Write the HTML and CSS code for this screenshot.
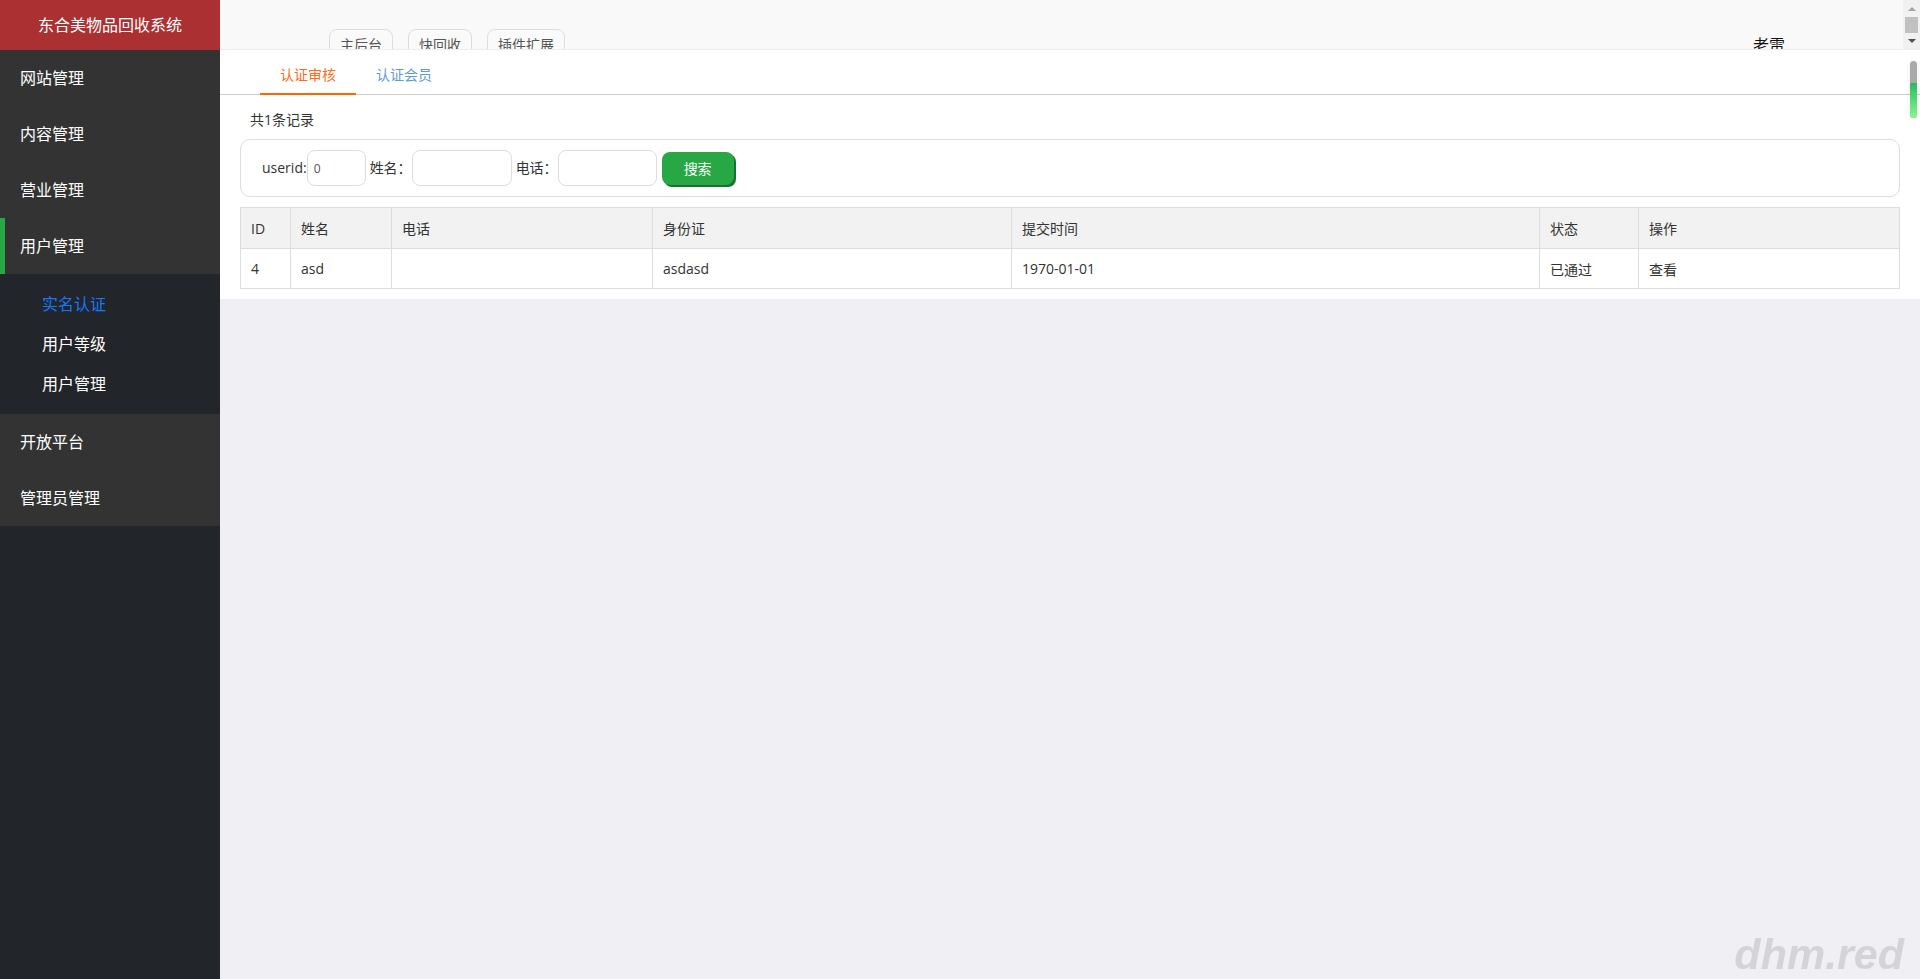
FILE: index.html
```html
<!DOCTYPE html>
<html lang="zh-CN">
  <head>
    <meta charset="UTF-8" />
    <meta name="viewport" content="width=device-width, initial-scale=1.0" />
    <title>东合美物品回收系统</title>
    <link rel="stylesheet" href="styles.css">
  </head>
  <body>
    <div class="layout">
      <aside class="sidebar">
        <div class="brand">东合美物品回收系统</div>
        <ul class="menu">
          <li class="menu-item"><a href="#" class="menu-link">网站管理</a></li>
          <li class="menu-item"><a href="#" class="menu-link">内容管理</a></li>
          <li class="menu-item"><a href="#" class="menu-link">营业管理</a></li>
          <li class="menu-item open">
            <a href="#" class="menu-link">用户管理</a>
            <ul class="submenu">
              <li class="active"><a href="#">实名认证</a></li>
              <li><a href="#">用户等级</a></li>
              <li><a href="#">用户管理</a></li>
            </ul>
          </li>
          <li class="menu-item"><a href="#" class="menu-link">开放平台</a></li>
          <li class="menu-item"><a href="#" class="menu-link">管理员管理</a></li>
        </ul>
      </aside>

      <div class="main">
        <header class="topbar">
          <nav class="nav">
            <a href="#" class="nav-btn">主后台</a>
            <a href="#" class="nav-btn">快回收</a>
            <a href="#" class="nav-btn">插件扩展</a>
          </nav>
          <div class="user">老雷</div>
          <div class="frame-scroll">
            <span class="arrow-up"></span>
            <span class="thumb"></span>
            <span class="arrow-down"></span>
          </div>
        </header>

        <section class="content">
          <div class="tabs">
            <a href="#" class="tab active">认证审核</a>
            <a href="#" class="tab">认证会员</a>
          </div>

          <div class="count">共1条记录</div>

          <form class="search" onsubmit="return false">
            <label>userid:</label>
            <input type="text" class="input-id" value="0" />
            <label>姓名：</label>
            <input type="text" class="input-name" />
            <label>电话：</label>
            <input type="text" class="input-phone" />
            <button class="btn-search">搜索</button>
          </form>

          <table class="list">
            <colgroup>
              <col class="c-id" />
              <col class="c-name" />
              <col class="c-phone" />
              <col class="c-card" />
              <col class="c-time" />
              <col class="c-status" />
              <col />
            </colgroup>
            <thead>
              <tr>
                <th>ID</th>
                <th>姓名</th>
                <th>电话</th>
                <th>身份证</th>
                <th>提交时间</th>
                <th>状态</th>
                <th>操作</th>
              </tr>
            </thead>
            <tbody>
              <tr>
                <td>4</td>
                <td>asd</td>
                <td></td>
                <td>asdasd</td>
                <td>1970-01-01</td>
                <td>已通过</td>
                <td><a href="#" class="view">查看</a></td>
              </tr>
            </tbody>
          </table>

          <div class="scroll-meter"><span></span></div>
        </section>
      </div>
    </div>

    <div class="watermark">dhm.red</div>
  </body>
</html>
```

FILE: styles.css
```css
* {
  box-sizing: border-box;
}
html,
body {
  margin: 0;
  height: 100%;
}
body {
  font-family: "Open Sans", "Noto Sans CJK SC", sans-serif;
  font-size: 14px;
  color: #333;
  background: #efeff4;
  overflow: hidden;
}
a {
  text-decoration: none;
}
.layout {
  display: flex;
  height: 100vh;
}

/* sidebar */
.sidebar {
  width: 220px;
  flex-shrink: 0;
  background: #222529;
}
.brand {
  height: 50px;
  line-height: 50px;
  text-align: center;
  background: #aa3032;
  color: #fff;
  font-size: 16px;
}
.menu,
.submenu {
  list-style: none;
  margin: 0;
  padding: 0;
}
.menu-link {
  display: block;
  height: 56px;
  line-height: 56px;
  padding-left: 20px;
  background: #333;
  color: #fff;
  font-size: 16px;
}
.menu-item.open > .menu-link {
  box-shadow: inset 5px 0 0 #28a745;
}
.submenu {
  background: #222529;
  padding: 10px 0;
}
.submenu a {
  display: block;
  height: 40px;
  line-height: 40px;
  padding-left: 42px;
  color: #fff;
  font-size: 16px;
}
.submenu .active a {
  color: #1677ff;
}

/* main */
.main {
  flex: 1;
  min-width: 0;
  display: flex;
  flex-direction: column;
}
.topbar {
  position: relative;
  height: 50px;
  flex-shrink: 0;
  overflow: hidden;
  display: flex;
  align-items: flex-start;
  padding: 29px 0 0 109px;
  background: #f9f9f9;
  border-bottom: 1px solid #eee;
}
.nav {
  display: flex;
  gap: 15px;
}
.nav-btn {
  height: 32px;
  line-height: 30px;
  padding: 0 10px;
  border: 1px solid #ddd;
  border-radius: 8px;
  background: #fafafa;
  color: #555;
  font-size: 14px;
}
.user {
  margin-left: auto;
  margin-right: 135px;
  margin-top: 6px;
  line-height: 20px;
  font-size: 16px;
  color: #111;
}
.frame-scroll {
  position: absolute;
  top: 0;
  right: 0;
  width: 17px;
  height: 50px;
  background: #f1f1f1;
}
.frame-scroll .arrow-up,
.frame-scroll .arrow-down {
  position: absolute;
  left: 5px;
  width: 0;
  height: 0;
  border-left: 4px solid transparent;
  border-right: 4px solid transparent;
}
.frame-scroll .arrow-up {
  top: 7px;
  border-bottom: 4px solid #a3a3a3;
}
.frame-scroll .arrow-down {
  top: 39px;
  border-top: 4px solid #505050;
}
.frame-scroll .thumb {
  position: absolute;
  top: 17px;
  left: 2px;
  width: 13px;
  height: 16px;
  background: #c1c1c1;
}

/* content */
.content {
  position: relative;
  background: #fff;
  padding: 0 20px 10px;
}
.tabs {
  display: flex;
  margin: 0 -20px;
  padding-left: 40px;
  border-bottom: 1px solid #ccc;
}
.tab {
  padding: 6px 20px 0;
  line-height: 38px;
  color: #5b9bd5;
}
.tab.active {
  line-height: 37px;
  color: #ff6a1a;
  border-bottom: 2px solid #f60;
  margin-bottom: -1px;
}
.count {
  margin-top: 15px;
  padding-left: 10px;
  line-height: 20px;
}
.search {
  display: flex;
  align-items: center;
  margin: 9px 0 0;
  padding: 10px 21px;
  border: 1px solid #ddd;
  border-radius: 10px;
}
.search label {
  margin-left: 4px;
  line-height: 20px;
}
.search label:first-child {
  margin-left: 0;
}
.search input {
  height: 36px;
  padding: 0 6px;
  border: 1px solid #ddd;
  border-radius: 8px;
  font-family: inherit;
  font-size: 12px;
  color: #555;
  outline: none;
}
.input-id {
  width: 59px;
}
.input-name {
  width: 100px;
}
.input-phone {
  width: 99px;
}
.btn-search {
  margin-left: 5px;
  width: 72px;
  height: 33px;
  border: none;
  border-radius: 8px;
  background: #28a745;
  color: #fff;
  font-family: inherit;
  font-size: 14px;
  box-shadow: 2px 2px 0 #1b6e31;
  cursor: pointer;
}
.list {
  width: 100%;
  margin-top: 10px;
  border-collapse: collapse;
  table-layout: fixed;
}
.list th,
.list td {
  padding: 0 10px;
  border: 1px solid #ddd;
  text-align: left;
  font-weight: normal;
  color: #333;
}
.list th {
  height: 41px;
  background: #f2f2f2;
}
.list td {
  height: 40px;
}
.c-id {
  width: 50px;
}
.c-name {
  width: 101px;
}
.c-phone {
  width: 261px;
}
.c-card {
  width: 359px;
}
.c-time {
  width: 528px;
}
.c-status {
  width: 99px;
}
.view {
  color: #333;
}
.scroll-meter {
  position: absolute;
  top: 11px;
  right: 3px;
  width: 7px;
  height: 57px;
  border-radius: 4px;
  background: #a9a9a9;
  overflow: hidden;
  box-shadow: 0 0 6px rgba(0, 0, 0, 0.08);
}
.scroll-meter span {
  position: absolute;
  left: 0;
  right: 0;
  bottom: 0;
  height: 35px;
  background: linear-gradient(#27bd5f, #8af58f);
}

.watermark {
  position: fixed;
  right: 16px;
  bottom: 3px;
  font-family: "Liberation Sans", Arial, sans-serif;
  font-style: italic;
  font-weight: bold;
  font-size: 43px;
  line-height: 43px;
  color: #d3d3d8;
}
```
